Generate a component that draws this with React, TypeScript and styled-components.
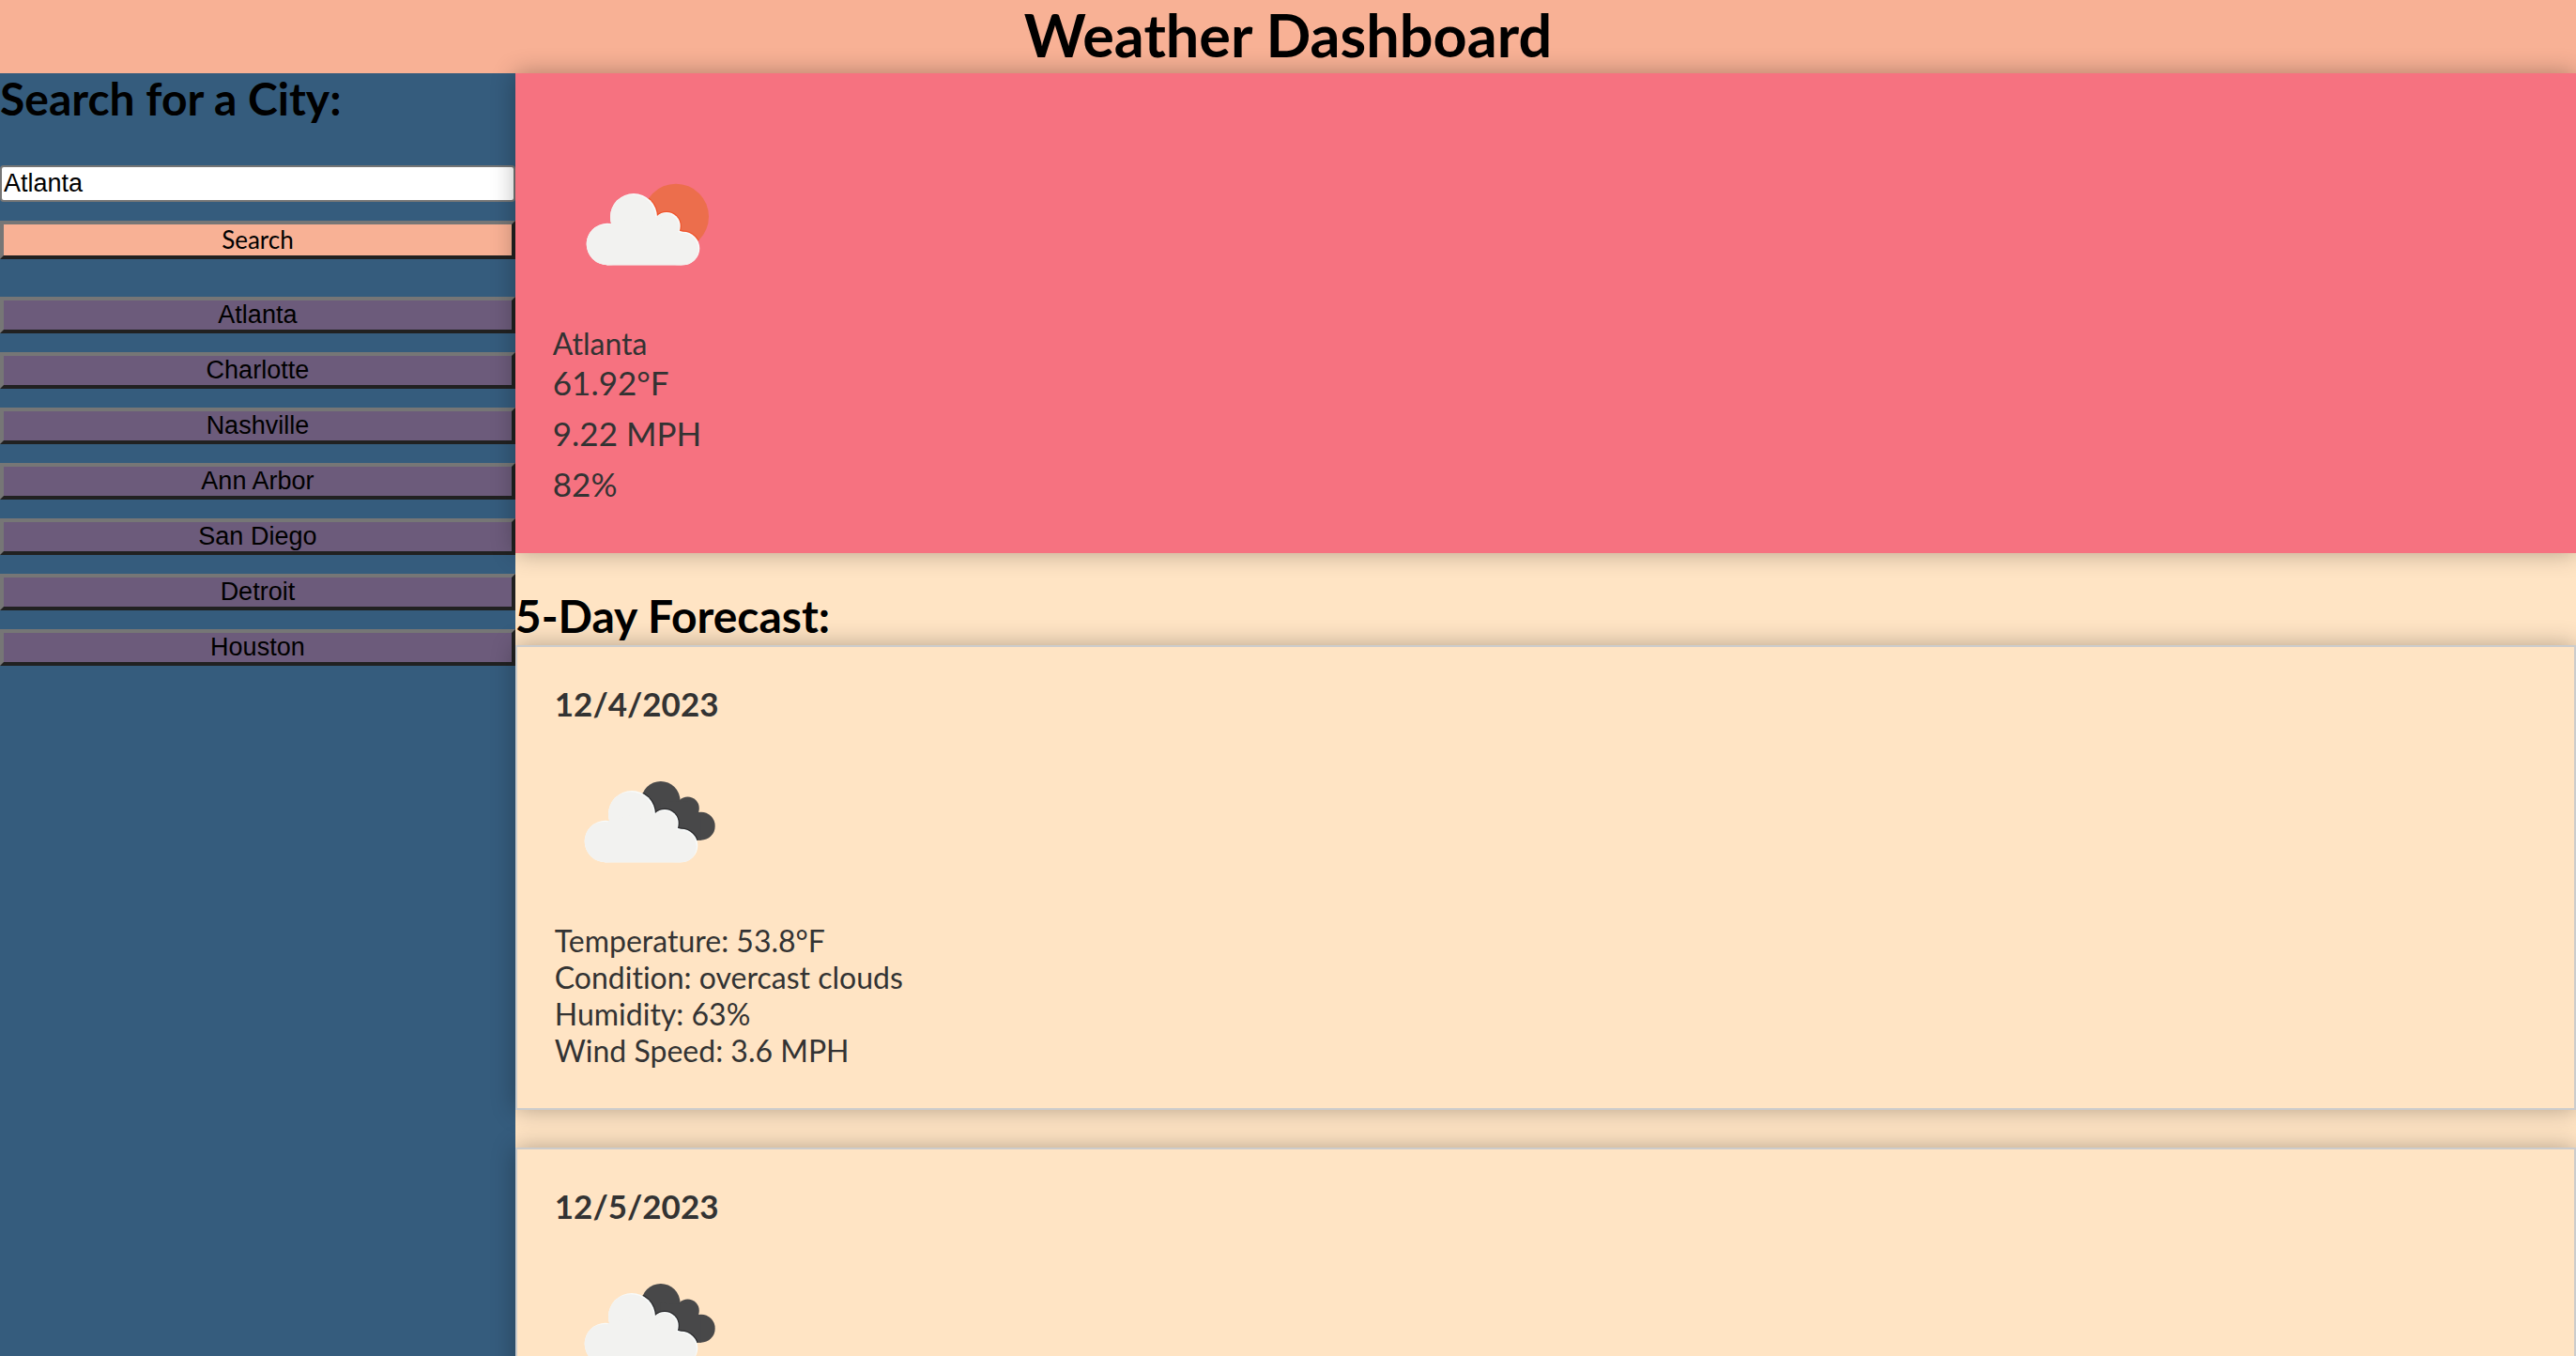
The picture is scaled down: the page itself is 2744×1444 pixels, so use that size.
import React, { useId, useState } from 'react';
import styled, { createGlobalStyle } from 'styled-components';

const palette = {
  peach: '#f8b195',
  coral: '#f67280',
  plum: '#6c5b7b',
  navy: '#355c7d',
  cream: '#ffe4c4',
  ink: '#333333',
};

const humanist = 'Optima, Lato, "Open Sans", sans-serif';
const grotesque = 'Arial, "Liberation Sans", sans-serif';

const GlobalStyle = createGlobalStyle`
  *, *::before, *::after { box-sizing: border-box; }
  body {
    margin: 0;
    background: ${palette.cream};
    font-family: ${humanist};
    font-variant-ligatures: no-common-ligatures;
  }
  h1, h2, h3, p, ul { margin: 0; padding: 0; }
`;

const Page = styled.div`
  height: 100vh;
  overflow: hidden;
  display: flex;
  flex-direction: column;
`;

const Header = styled.header`
  padding-bottom: 4px;
  background: ${palette.peach};
  text-align: center;
`;

const PageTitle = styled.h1`
  font-size: 63px;
  line-height: 74px;
  font-weight: 700;
`;

const Body = styled.div`
  flex: 1;
  min-height: 0;
  display: flex;
`;

const Sidebar = styled.aside`
  width: 20%;
  flex: none;
  background: ${palette.navy};
`;

const SectionTitle = styled.h2`
  && {
    display: block;
    padding-bottom: 4px;
  }
  font-size: 48px;
  line-height: 54px;
  font-weight: 700;
`;

const SearchForm = styled.form`
  display: flex;
  flex-direction: column;
  gap: 20px;
`;

const SearchLabel = styled.label`
  display: block;
  padding-bottom: 20px;
`;

const CityInput = styled.input`
  width: 100%;
  height: 39px;
  padding: 2px;
  border: 2px solid #767676;
  border-radius: 4px;
  background: #ffffff;
  color: #000000;
  font-family: ${grotesque};
  font-size: 27px;
`;

const BevelButton = styled.button<{ $primary?: boolean }>`
  display: block;
  width: 100%;
  height: ${(p) => (p.$primary ? 41 : 39)}px;
  padding: 0;
  border: 4px solid;
  border-color: #767676 #212121 #212121 #767676;
  background: ${(p) => (p.$primary ? palette.peach : palette.plum)};
  color: #000000;
  font-family: ${(p) => (p.$primary ? humanist : grotesque)};
  font-size: ${(p) => (p.$primary ? 26 : 27)}px;
  line-height: 31px;
`;

const History = styled.ul`
  list-style: none;
  && {
    margin-top: 40px;
  }
  display: flex;
  flex-direction: column;
  gap: 20px;
`;

const Main = styled.main`
  flex: 1;
  min-width: 0;
`;

const Panel = styled.section`
  padding: 40px 40px 42px;
  margin-bottom: 40px;
  color: ${palette.ink};
  box-shadow: 0 0 24px rgba(0, 0, 0, 0.3);
`;

const CurrentPanel = styled(Panel)`
  padding-top: 61px;
  background: ${palette.coral};
`;

const ForecastCard = styled(Panel)`
  border: 2px solid #cccccc;
  background: ${palette.cream};
`;

const CardDate = styled.h3`
  && {
    margin-bottom: 6px;
  }
  font-size: 35px;
  line-height: 40px;
  font-weight: 700;
`;

const Icon = styled.svg`
  display: block;
  width: 200px;
  height: 200px;
  margin-bottom: 7px;
`;

const Detail = styled.p`
  font-size: 32px;
  line-height: 39px;
`;

const Reading = styled.p`
  && {
    margin-bottom: 10px;
  }
  font-size: 35px;
  line-height: 44px;
`;

const CloudShape = () => (
  <>
    <circle cx="57" cy="122" r="22.3" />
    <circle cx="85" cy="93" r="25" />
    <circle cx="120" cy="102.7" r="14.7" />
    <circle cx="137.5" cy="126.5" r="17.8" />
    <path d="M57 100 H62 L85 93 L120 102.7 L137.5 109 V144.3 H57 Z" />
  </>
);

const SunShape = () => <circle cx="130" cy="92.7" r="35" />;

const DarkCloudShape = () => (
  <>
    <circle cx="115.8" cy="78.7" r="20.7" />
    <circle cx="144.5" cy="86.7" r="12.3" />
    <circle cx="158.7" cy="105.7" r="15" />
    <path d="M115.8 78.7 L144.5 80 L158.7 93 V120.7 H115.8 Z" />
  </>
);

type Sky = 'sun' | 'cloud';

function WeatherIcon({ sky, label }: { sky: Sky; label: string }) {
  const id = useId();
  const Back = sky === 'sun' ? SunShape : DarkCloudShape;
  const backFill = sky === 'sun' ? '#ec6e4c' : '#484849';
  const edge = sky === 'sun' ? '#f0532a' : '#2b2b2d';
  return (
    <Icon viewBox={sky === 'sun' ? '-1 1 200 200' : '3 1 200 200'} role="img" aria-label={label}>
      <clipPath id={`${id}b`}>
        <Back />
      </clipPath>
      <clipPath id={`${id}c`}>
        <CloudShape />
      </clipPath>
      <g fill={backFill}>
        <Back />
      </g>
      <g clipPath={`url(#${id}b)`} fill={edge} stroke={edge} strokeWidth="2.4">
        <CloudShape />
      </g>
      <g fill="#f8fbfb">
        <CloudShape />
      </g>
      <g clipPath={`url(#${id}c)`} fill="#f2f2f0">
        <g transform="translate(-1.4 1.2)">
          <CloudShape />
          <path d="M57 130 H137.5 V150 H57 Z" />
        </g>
      </g>
    </Icon>
  );
}

const cities = ['Atlanta', 'Charlotte', 'Nashville', 'Ann Arbor', 'San Diego', 'Detroit', 'Houston'];

const readings = ['61.92°F', '9.22 MPH', '82%'];

const forecast = [
  {
    date: '12/4/2023',
    details: [
      'Temperature: 53.8°F',
      'Condition: overcast clouds',
      'Humidity: 63%',
      'Wind Speed: 3.6 MPH',
    ],
  },
  { date: '12/5/2023', details: [] },
];

export default function App() {
  const [city, setCity] = useState('Atlanta');
  return (
    <Page>
      <GlobalStyle />
      <Header>
        <PageTitle>Weather Dashboard</PageTitle>
      </Header>
      <Body>
        <Sidebar>
          <SearchForm onSubmit={(e) => e.preventDefault()}>
            <SearchLabel htmlFor="city">
              <SectionTitle as="span">Search for a City:</SectionTitle>
            </SearchLabel>
            <CityInput id="city" type="text" value={city} onChange={(e) => setCity(e.target.value)} />
            <BevelButton type="submit" $primary>
              Search
            </BevelButton>
          </SearchForm>
          <History>
            {cities.map((name) => (
              <li key={name}>
                <BevelButton type="button" onClick={() => setCity(name)}>
                  {name}
                </BevelButton>
              </li>
            ))}
          </History>
        </Sidebar>
        <Main>
          <CurrentPanel>
            <WeatherIcon sky="sun" label="few clouds" />
            <Detail>Atlanta</Detail>
            {readings.map((reading) => (
              <Reading key={reading}>{reading}</Reading>
            ))}
          </CurrentPanel>
          <SectionTitle>5-Day Forecast:</SectionTitle>
          {forecast.map((day) => (
            <ForecastCard key={day.date}>
              <CardDate>{day.date}</CardDate>
              <WeatherIcon sky="cloud" label="overcast clouds" />
              {day.details.map((line) => (
                <Detail key={line}>{line}</Detail>
              ))}
            </ForecastCard>
          ))}
        </Main>
      </Body>
    </Page>
  );
}
